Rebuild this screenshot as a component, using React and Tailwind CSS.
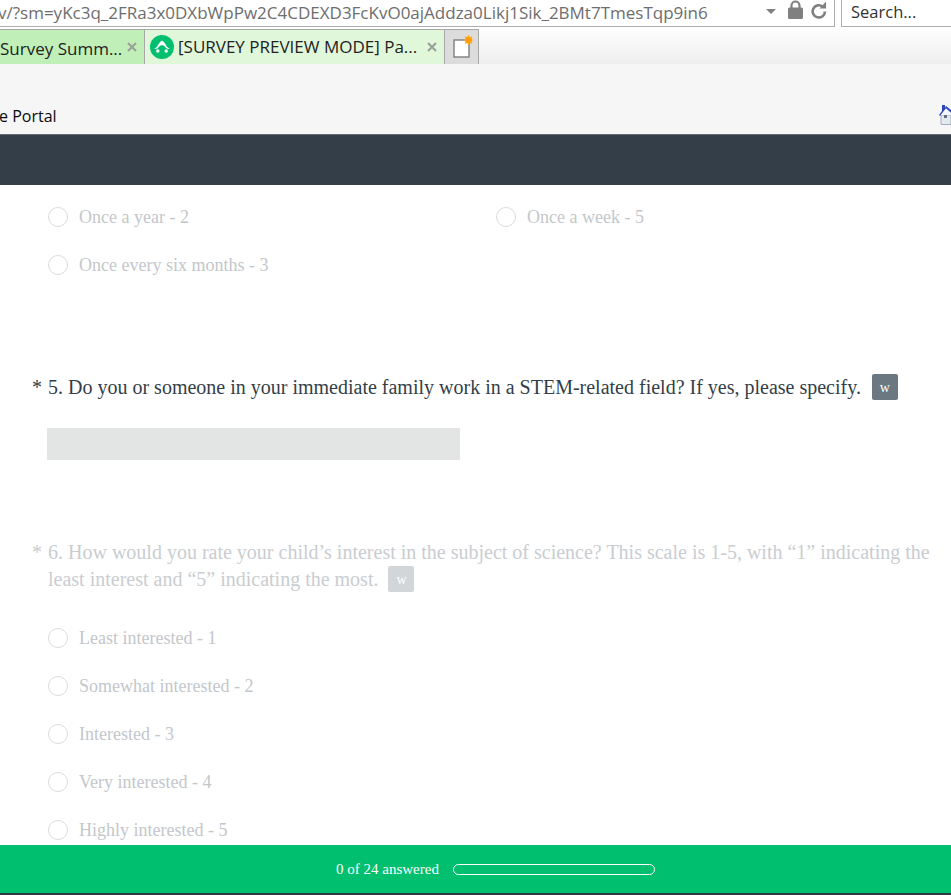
import React from "react";

const serif = "font-['Liberation_Serif',serif]";
const ui = "font-['Open_Sans',sans-serif]";

const Radio = ({ label }) => (
  <div className="flex items-center h-12">
    <span className="w-5 h-5 rounded-full border border-[#d9dcde] bg-white shrink-0"></span>
    <span className="ml-[11px] text-[18px] text-[#c3c7cb]">{label}</span>
  </div>
);

const HelpBadge = ({ faded }) => (
  <span
    className={`inline-flex items-center justify-center align-top w-[26px] h-[26px] rounded-[2px] text-[14px] text-white ${
      faded ? "bg-[#d2d6d9]" : "bg-[#6b7882]"
    }`}
  >
    w
  </span>
);

const TabClose = () => (
  <svg className="w-[10px] h-[10px] mr-[7px] shrink-0" viewBox="0 0 10 10">
    <path d="M1 1l8 8M9 1l-8 8" stroke="#98a098" strokeWidth="2" />
  </svg>
);

const App = () => {
  return (
    <div className="w-[951px] h-[895px] overflow-hidden flex flex-col bg-white">
      {/* address bar */}
      <div className={`h-[27px] flex shrink-0 ${ui}`}>
        <div className="w-[835px] h-[27px] border-r border-b border-[#aeaeae] flex items-center pb-[1px] overflow-hidden">
          <span className="flex-1 min-w-0 -ml-[2px] whitespace-nowrap text-[17px] text-[#6d6d6d]">
            v/?sm=yKc3q_2FRa3x0DXbWpPw2C4CDEXD3FcKvO0ajAddza0Likj1Sik_2BMt7TmesTqp9in6
          </span>
          <svg className="w-[10px] h-[5px] mb-[3px] shrink-0" viewBox="0 0 10 5">
            <path d="M0 0h10L5 5z" fill="#808080" />
          </svg>
          <svg className="w-[15px] h-[19px] ml-[12px] mb-[6px] shrink-0" viewBox="0 0 15 19">
            <path d="M3.500 8V5.500a4 4 0 018 0V8" fill="none" stroke="#808080" strokeWidth="2.200" />
            <rect x="0" y="7.500" width="15" height="11.500" rx="1.500" fill="#808080" />
          </svg>
          <svg className="w-[16px] h-[18px] ml-[8px] mr-[7px] mb-[5px] shrink-0" viewBox="0 0 17 18">
            <path d="M12.500 5.500A6.500 6.500 0 1014.800 10.500" fill="none" stroke="#808080" strokeWidth="2.800" />
            <path d="M9 7.500L16 7.500V0z" fill="#808080" />
          </svg>
        </div>
        <div className="w-[6px]"></div>
        <div className="flex-1 h-[27px] border-l border-b border-[#aeaeae] pl-[9px] pb-[1px] flex items-center text-[16.500px] text-[#333333]">
          Search...
        </div>
      </div>

      {/* tab strip */}
      <div className={`h-[37px] shrink-0 flex items-end bg-gradient-to-b from-white to-[#eeeeee] ${ui}`}>
        <div className="h-[35px] w-[145px] bg-[#c1efb8] border-t border-r border-[#a8a8a8] flex items-center text-[17px] text-[#222222]">
          <span className="flex-1 whitespace-nowrap pt-[3px]">Survey Summ...</span>
          <TabClose />
        </div>
        <div className="h-[35px] w-[300px] bg-[#e1f7da] border-t border-r border-[#a8a8a8] flex items-center text-[17px] text-[#222222]">
          <svg className="w-6 h-6 ml-[5px] mr-1 shrink-0" viewBox="0 0 24 24">
            <circle cx="12" cy="12" r="12" fill="#00bf6f" />
            <path d="M4 13.500c1.800-.3 2.800-1.200 3.800-3C8.800 8.500 10 6.800 12 5.500c2 1.300 3.200 3 4.200 5 1 1.800 2 2.700 3.800 3-1.800 1-3.500.4-4.800-1.500-.8-1.200-1.800-1.800-3.200-1.800s-2.400.6-3.200 1.800C7.500 13.900 5.800 14.500 4 13.500z" fill="#fff" />
            <circle cx="7.800" cy="16" r="1.700" fill="#fff" />
            <circle cx="16.200" cy="16" r="1.700" fill="#fff" />
          </svg>
          <span className="flex-1 whitespace-nowrap">[SURVEY PREVIEW MODE] Pa...</span>
          <TabClose />
        </div>
        <div className="h-[35px] w-[34px] bg-[#dcdcdc] border-t border-r border-[#a8a8a8] flex items-center pl-2">
          <svg className="w-[22px] h-[24px] shrink-0" viewBox="0 0 22 24">
            <path d="M1 5h15v17H1z" fill="#fff" stroke="#858585" strokeWidth="1.500" />
            <path d="M15.500 0v10M10.500 5h10M12 1.500l7 7M19 1.500l-7 7" stroke="#fdb42a" strokeWidth="1.200" />
            <circle cx="15.500" cy="5" r="3.500" fill="#ff9f10" />
          </svg>
        </div>
      </div>

      {/* favourites bar */}
      <div className={`h-[71px] shrink-0 bg-[#f6f6f6] border-b border-[#666b70] flex items-end justify-between pb-[6px] ${ui}`}>
        <span className="text-[16px] leading-6 text-[#0a0a0a] -ml-[1px]">e Portal</span>
        <svg className="w-[12px] h-[20px] mb-[3px] shrink-0" viewBox="0 0 12 20">
          <path d="M2 10h10v9.500H2z" fill="#e4e9f0" stroke="#a3aebd" />
          <path d="M3 0h3v3L7 1l5 4v3L7 3.500 1 11 0 10l3-4z" fill="#2c44c0" />
          <path d="M1 11l6-7.500L12 8v2H2z" fill="#f4f6fa" />
          <rect x="5" y="10" width="3" height="3" fill="#66707c" />
        </svg>
      </div>

      {/* dark header */}
      <div className="h-[50px] shrink-0 bg-[#333e48]"></div>

      {/* survey body */}
      <div className={`flex-1 min-h-0 overflow-hidden pl-[33px] pr-4 ${serif}`}>
        <div className="pl-[15px] pt-2 grid grid-cols-[448px_1fr]">
          <Radio label="Once a year - 2" />
          <Radio label="Once a week - 5" />
          <Radio label="Once every six months - 3" />
        </div>

        <div className="mt-[85px] flex text-[20px] leading-[27px] text-[#333e48]">
          <span className="w-[16px] -ml-[1px] shrink-0">*</span>
          <p>
            5. Do you or someone in your immediate family work in a STEM-related field? If yes, please specify.
            <span className="ml-[11px]"><HelpBadge /></span>
          </p>
        </div>
        <div className="ml-[14px] mt-[27px] w-[413px] h-8 bg-[#e3e4e4]"></div>

        <div className="mt-[79px] flex text-[20px] leading-[27px] text-[#c9cdd1]">
          <span className="w-[16px] -ml-[1px] shrink-0">*</span>
          <p className="max-w-[890px]">
            6. How would you rate your child’s interest in the subject of science? This scale is 1-5, with “1” indicating the least interest and “5” indicating the most.
            <span className="ml-[10px]"><HelpBadge faded /></span>
          </p>
        </div>
        <div className="pl-[15px] mt-[21px]">
          <Radio label="Least interested - 1" />
          <Radio label="Somewhat interested - 2" />
          <Radio label="Interested - 3" />
          <Radio label="Very interested - 4" />
          <Radio label="Highly interested - 5" />
        </div>
      </div>

      {/* progress footer */}
      <div className={`h-[50px] shrink-0 bg-[#00bf6f] border-b-2 border-[#2c3a45] flex items-center pl-[336px] ${serif}`}>
        <span className="text-[15px] text-white">0 of 24 answered</span>
        <span className="ml-[14px] w-[202px] h-[11px] rounded-full border border-white"></span>
      </div>
    </div>
  );
};

export default App;
